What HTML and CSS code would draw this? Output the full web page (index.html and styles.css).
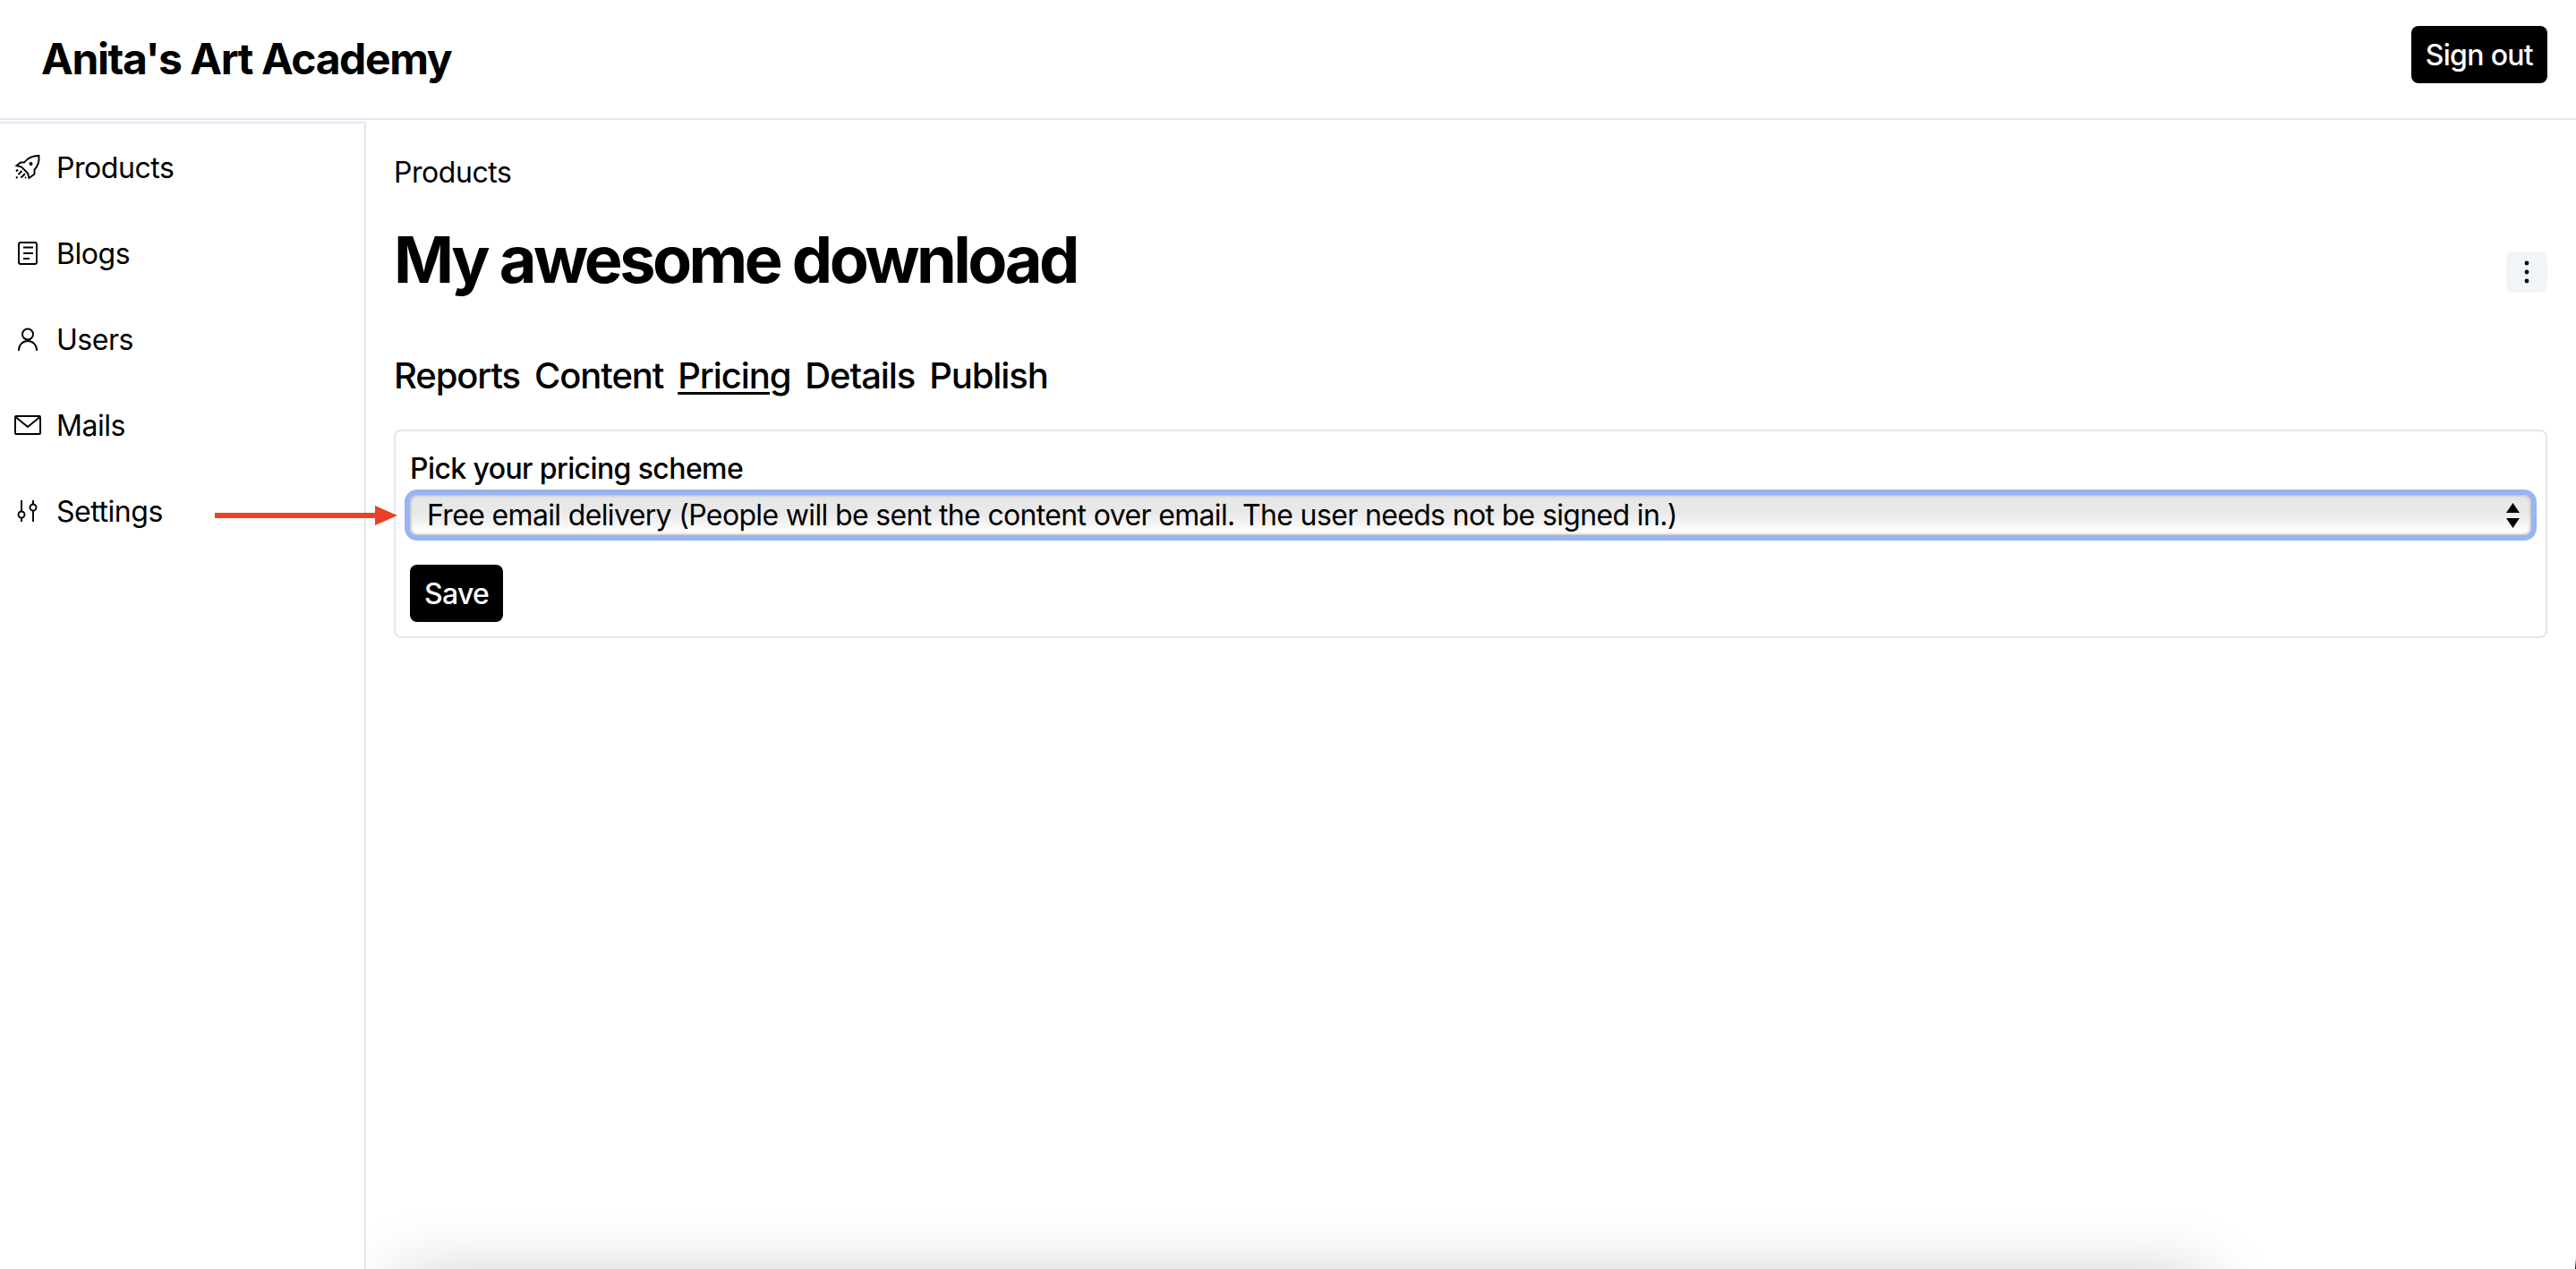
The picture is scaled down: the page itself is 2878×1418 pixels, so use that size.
FILE: index.html
```html
<!DOCTYPE html>
<html lang="en">

<head>
     <meta charset="UTF-8">
     <title>Anita's Art Academy</title>
     <link rel="stylesheet" href="styles.css">
</head>

<body>
     <header class="topbar">
          <a class="brand" href="#">Anita's Art Academy</a>
          <button class="btn" type="button">Sign out</button>
     </header>

     <div class="layout">
          <nav class="sidebar">
               <a class="nav-item" href="#">
                    <svg class="nav-icon" viewBox="0 0 32 32"><path d="M28.500 3C21 3 15.500 6 12 10.500H8L3.500 14l5.500 1.500 7 7L17.500 28l6-4.500v-5C27 15 29 9.500 28.500 3Z"/><circle cx="19.500" cy="12" r="2" class="dot"/><path d="M9.500 20 5.500 24M13 23l-4.500 4.500M5 18.500 3 20.500M4.500 26.500l-1.500 1.500M13 28l1-1"/></svg>
                    <span>Products</span>
               </a>
               <a class="nav-item" href="#">
                    <svg class="nav-icon" viewBox="0 0 32 32"><rect x="6" y="4" width="20" height="24" rx="2"/><path d="M11 9.500h11M11 16h11M11 22h7"/></svg>
                    <span>Blogs</span>
               </a>
               <a class="nav-item" href="#">
                    <svg class="nav-icon" viewBox="0 0 32 32"><circle cx="16" cy="10.500" r="6"/><path d="M6 29v-1a10 10 0 0 1 20 0v1"/></svg>
                    <span>Users</span>
               </a>
               <a class="nav-item" href="#">
                    <svg class="nav-icon" viewBox="0 0 32 32"><rect x="2" y="6" width="28" height="20" rx="1"/><path d="M2.500 7 16 18 29.500 7"/></svg>
                    <span>Mails</span>
               </a>
               <a class="nav-item" href="#">
                    <svg class="nav-icon" viewBox="0 0 32 32"><path d="M9 4v12.500M9 23.500V28M22 4v4.500M22 15.500V28"/><circle cx="9" cy="20" r="3.500"/><circle cx="22" cy="12" r="3.500"/></svg>
                    <span>Settings</span>
               </a>
          </nav>

          <main class="content">
               <a class="crumb" href="#">Products</a>
               <div class="title-row">
                    <h1>My awesome download</h1>
                    <button class="kebab" type="button" aria-label="More">
                         <svg viewBox="0 0 6 26"><circle cx="3" cy="3" r="2.400"/><circle cx="3" cy="13" r="2.400"/><circle cx="3" cy="23" r="2.400"/></svg>
                    </button>
               </div>
               <div class="tabs">
                    <a href="#">Reports</a>
                    <a href="#">Content</a>
                    <a href="#" class="current">Pricing</a>
                    <a href="#">Details</a>
                    <a href="#">Publish</a>
               </div>
               <form class="card">
                    <label for="scheme">Pick your pricing scheme</label>
                    <div class="select-wrap">
                         <select id="scheme">
                              <option>Free email delivery (People will be sent the content over email. The user needs not be signed in.)</option>
                         </select>
                         <svg class="select-arrows" viewBox="0 0 15 28"><path d="M7.500 0 15 11H0ZM0 17H15L7.500 28Z"/></svg>
                    </div>
                    <button class="btn" type="button">Save</button>
               </form>
          </main>
     </div>

     <!-- annotation over the screenshot -->
     <svg class="pointer" viewBox="0 0 204 24"><path d="M0 12H186" class="pointer-line"/><path d="M179 1 204 12 179 23Z" class="pointer-head"/></svg>
     <div class="bottom-shadow"></div>
     <div class="corner-mark"></div>
</body>

</html>
```

FILE: styles.css
```css
:root {
     --FONT-FAMILY: Inter, "Liberation Sans", sans-serif;
     --BORDER-color: #e2e8f0;
     --RING-color: #98b4f2;
}

* {
     margin: 0;
     padding: 0;
     box-sizing: border-box;
}

html,
body {
     height: 100%;
     background: #fff;
     overflow: hidden;
}

body {
     font-family: var(--FONT-FAMILY);
     font-size: 32px;
     letter-spacing: -.45px;
     color: #000;
}

a {
     color: inherit;
     text-decoration: none;
}

/** top bar **/
.topbar {
     display: flex;
     justify-content: space-between;
     align-items: center;
     height: 134px;
     padding: 0 32px 10px 46px;
     border-bottom: 2px solid var(--BORDER-color);
}

.brand {
     margin-top: 8px;
     font-size: 48px;
     font-weight: 700;
     letter-spacing: -1.400px;
}

.btn {
     height: 64px;
     padding: 0 16px;
     border: 0;
     border-radius: 8px;
     background: #000;
     color: #fff;
     font-family: inherit;
     font-size: 32px;
     font-weight: 500;
     letter-spacing: -.7px;
}

/** page layout **/
.layout {
     display: grid;
     grid-template-columns: 409px 1fr;
     height: calc(100% - 134px);
}

.sidebar {
     position: relative;
     z-index: 1;
     margin-top: 2px;
     padding-top: 25px;
     background: #fff;
     border-top: 2px solid var(--BORDER-color);
     border-right: 2px solid var(--BORDER-color);
     display: flex;
     flex-direction: column;
     gap: 48px;
}

.nav-item {
     display: flex;
     align-items: center;
     gap: 16px;
     height: 48px;
     padding-left: 15px;
}

.nav-icon {
     width: 32px;
     height: 32px;
     flex: none;
     fill: none;
     stroke: #000;
     stroke-width: 1.900;
}

.nav-icon .dot {
     fill: #000;
     stroke: none;
}

.content {
     padding: 39px 32px 0 31px;
}

.crumb {
     display: block;
     line-height: 40px;
}

.title-row {
     display: flex;
     justify-content: space-between;
     align-items: flex-end;
     margin-top: 33px;
}

h1 {
     font-size: 72px;
     font-weight: 700;
     line-height: 88px;
     letter-spacing: -3.500px;
}

.kebab {
     width: 46px;
     height: 46px;
     margin-bottom: 7px;
     border: 0;
     border-radius: 8px;
     background: #f1f5f9;
     display: flex;
     align-items: center;
     justify-content: center;
}

.kebab svg {
     width: 6px;
     height: 26px;
     fill: #000;
}

.tabs {
     display: flex;
     gap: 16px;
     margin-top: 58px;
     font-size: 40px;
     font-weight: 500;
     line-height: 56px;
     letter-spacing: -1.100px;
}

.tabs .current {
     text-decoration: underline;
     text-underline-offset: 4px;
     text-decoration-thickness: 3px;
}

.card {
     margin-top: 32px;
     padding: 22px 16px 16px;
     border: 2px solid var(--BORDER-color);
     border-radius: 8px;
     height: 233px;
     display: flex;
     flex-direction: column;
     align-items: flex-start;
}

.card label {
     font-weight: 500;
     line-height: 40px;
     letter-spacing: -.6px;
}

.select-wrap {
     position: relative;
     width: calc(100% + 12px);
     margin: 3px -6px 27px;
}

.select-wrap select {
     display: block;
     width: 100%;
     height: 57px;
     padding: 0 18px 0 19px;
     appearance: none;
     border: 6px solid var(--RING-color);
     border-radius: 14px;
     background: linear-gradient(#e6e6e6, #e9e9e9 45%, #fbfbfb 85%, #fff);
     box-shadow: inset 0 0 3px 1px #b9b9b9;
     color: #000;
     font-family: inherit;
     font-size: 32px;
     letter-spacing: -.65px;
     outline: 0;
}

.select-arrows {
     position: absolute;
     top: 15px;
     right: 19px;
     width: 15px;
     height: 28px;
}

/** annotation **/
.pointer {
     position: absolute;
     left: 240px;
     top: 564px;
     width: 204px;
     height: 24px;
     z-index: 2;
}

.pointer-line {
     stroke: #ea4125;
     stroke-width: 6;
}

.pointer-head {
     fill: #ea4125;
}

.bottom-shadow {
     position: absolute;
     left: 445px;
     right: 413px;
     top: 1430px;
     height: 60px;
     box-shadow: 0 0 80px rgba(0, 0, 0, .24);
}

.corner-mark {
     position: absolute;
     right: 0;
     bottom: 0;
     width: 1px;
     height: 12px;
     background: linear-gradient(#fff, #000);
}
```
